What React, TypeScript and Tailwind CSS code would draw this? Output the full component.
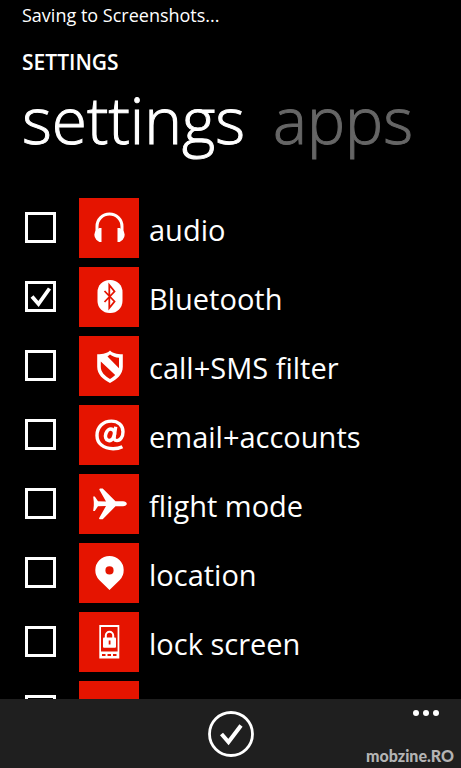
import { useState, type ReactNode } from "react";

const HeadphonesIcon = () => (
  <svg viewBox="0 0 60 60" className="size-full" aria-hidden="true">
    <path d="M18 34v-5.500a12.500 12.500 0 0 1 25 0V34" fill="none" stroke="#fff" strokeWidth="3" />
    <path d="M22.500 30v14h-2.200l-3-2.300a7 7 0 0 1 0-9.700l3-2z" fill="#fff" />
    <path d="M38.500 30v14h2.200l3-2.300a7 7 0 0 0 0-9.700l-3-2z" fill="#fff" />
  </svg>
);

const BluetoothIcon = () => (
  <svg viewBox="0 0 60 60" className="size-full" aria-hidden="true">
    <rect x="18.500" y="13" width="25" height="33" rx="12" fill="#fff" />
    <path d="M25.500 24 35.500 34.500l-5.200 6.500V18l5.200 6.500-10 10.500" fill="none" stroke="#e51400" strokeWidth="1.800" />
  </svg>
);

const ShieldIcon = () => (
  <svg viewBox="0 0 60 60" className="size-full" aria-hidden="true">
    <path
      fill="#fff"
      fillRule="evenodd"
      d="M31 14.500c2.600 2.700 6.300 3.700 12.800 3.700v12.600c0 7.600-5.800 12.700-12.800 16.200-7-3.500-12.800-8.600-12.800-16.200V18.200c6.500 0 10.200-1 12.800-3.700zM28.500 20.500 40 32.200V21.800c-3.500-.3-6.500-1.400-9-3.300zM21.800 25.500v5.300c0 5.300 3.800 9 9.200 12.200 2.200-1.300 3.800-2.500 5.200-4z"
    />
  </svg>
);

const AtIcon = () => (
  <svg viewBox="0 0 60 60" className="size-full" aria-hidden="true">
    <path
      d="M43.400 41.700c-2.800 1.400-6.100 2-9.300 2-9.600 0-16.100-5.300-16.100-13.300 0-8.600 6.300-14.300 14.400-14.300 6.700 0 11.600 4.200 11.600 10.700 0 5-2.600 8.800-6 8.800-2.700 0-3.300-1.700-2.800-4.400l1.500-9.400"
      fill="none"
      stroke="#fff"
      strokeWidth="3.400"
    />
    <ellipse cx="31" cy="29.800" rx="4.300" ry="5.900" transform="rotate(18 31 29.800)" fill="none" stroke="#fff" strokeWidth="3.600" />
  </svg>
);

const PlaneIcon = () => (
  <svg viewBox="0 0 60 60" className="size-full" aria-hidden="true">
    <path
      d="M14.200 22.500h1.600l3.200 4.800 8 .2-6.500-11.500c-.5-1 .3-1.500 1.200-1.500h2L36.500 27.300h7.500c2 0 3.800 1.200 3.800 2.500s-1.800 2.500-3.800 2.500h-7.500L23.700 45.300h-2.500c-.9 0-1.400-.5-1-1.400L27 32l-8 .2-3.200 4.800h-1.600l.6-5.600V28z"
      fill="#fff"
    />
  </svg>
);

const PinIcon = () => (
  <svg viewBox="0 0 60 60" className="size-full" aria-hidden="true">
    <path
      fill="#fff"
      fillRule="evenodd"
      d="M30.500 47 20.200 37a14.200 14.200 0 1 1 20.600 0zM30.500 23.300a4.100 4.100 0 1 0 0 8.200 4.100 4.100 0 0 0 0-8.200z"
    />
  </svg>
);

const LockScreenIcon = () => (
  <svg viewBox="0 0 60 60" className="size-full" aria-hidden="true">
    <path fill="#fff" fillRule="evenodd" d="M20.300 13h20v33.500h-20zM22 15v24.500h16.600V15z" />
    <path d="M23 42h3.500v2H23zM28.500 42H32v2h-3.500zM34 42h3.500v2H34z" fill="#e51400" />
    <path d="M26.800 26v-2.500a3.700 3.700 0 0 1 7.400 0V26" fill="none" stroke="#fff" strokeWidth="2" />
    <rect x="24" y="25.500" width="13" height="10.300" rx="1" fill="#fff" />
    <path d="M29.700 28.500h1.800v4h-1.800z" fill="#e51400" />
  </svg>
);

type Item = { id: string; label: string; icon: ReactNode };

const items: Item[] = [
  { id: "audio", label: "audio", icon: <HeadphonesIcon /> },
  { id: "bluetooth", label: "Bluetooth", icon: <BluetoothIcon /> },
  { id: "filter", label: "call+SMS filter", icon: <ShieldIcon /> },
  { id: "email", label: "email+accounts", icon: <AtIcon /> },
  { id: "flight", label: "flight mode", icon: <PlaneIcon /> },
  { id: "location", label: "location", icon: <PinIcon /> },
  { id: "lock", label: "lock screen", icon: <LockScreenIcon /> },
  { id: "more", label: "", icon: null },
];

export default function App() {
  const [selected, setSelected] = useState<string[]>(["bluetooth"]);
  const toggle = (id: string) =>
    setSelected((s) => (s.includes(id) ? s.filter((x) => x !== id) : [...s, id]));

  return (
    <div className="flex h-screen flex-col overflow-hidden bg-black font-['Open_Sans','Noto_Sans',sans-serif] text-white [font-variant-ligatures:none]">
      <header className="shrink-0 px-[22px]">
        <p className="pt-[3px] text-lg leading-6">Saving to Screenshots...</p>
        <h1 className="pt-[21px] text-[21px] leading-7 font-semibold">SETTINGS</h1>
        <nav className="flex gap-7 text-[64px] leading-[88px] whitespace-nowrap [-webkit-text-stroke-width:1px]">
          <button type="button" className="font-light">settings</button>
          <button type="button" className="font-light text-[#666]">apps</button>
        </nav>
      </header>

      <main className="min-h-0 flex-1 overflow-hidden pt-[34px] pl-[25px]">
        <ul className="flex flex-col gap-[9px]">
          {items.map((item) => (
            <li key={item.id}>
              <label className="flex h-[60px] items-center">
                <span className="grid h-8 w-[31px] shrink-0 items-start">
                  <input
                    type="checkbox"
                    aria-label={item.label || "more"}
                    checked={selected.includes(item.id)}
                    onChange={() => toggle(item.id)}
                    className="col-start-1 row-start-1 size-[31px] appearance-none border-3 border-white"
                  />
                  {selected.includes(item.id) && (
                    <svg viewBox="0 0 31 31" className="pointer-events-none col-start-1 row-start-1 size-[31px]" aria-hidden="true">
                      <path d="m7 15.500 6.500 7.500L24.500 7.500" fill="none" stroke="#fff" strokeWidth="3.800" />
                    </svg>
                  )}
                </span>
                <span className="ml-[23px] size-[60px] shrink-0 bg-[#e51400]">{item.icon}</span>
                <span className="ml-[10px] pt-1 text-[29px] leading-9 whitespace-nowrap">{item.label}</span>
              </label>
            </li>
          ))}
        </ul>
      </main>

      <footer className="grid h-[69px] shrink-0 grid-cols-[1fr_auto_1fr] items-center bg-[#1f1f1f]">
        <button type="button" aria-label="done" className="col-start-2 size-[46px]">
          <svg viewBox="0 0 46 46" className="size-full" aria-hidden="true">
            <circle cx="23" cy="23" r="21.500" fill="none" stroke="#fff" strokeWidth="2.800" />
            <path d="m13.500 23 7 8L33 14.500" fill="none" stroke="#fff" strokeWidth="4" />
          </svg>
        </button>
        <div className="flex h-full flex-col items-end justify-between pr-[7px]">
          <button type="button" aria-label="more options" className="mt-[11px] mr-[15px] flex gap-1">
            <span className="size-[6px] rounded-full bg-white" />
            <span className="size-[6px] rounded-full bg-white" />
            <span className="size-[6px] rounded-full bg-white" />
          </button>
          <p className="font-[Lato,sans-serif] text-base leading-6 font-black text-[#b4b4b4]">mobzine.RO</p>
        </div>
      </footer>
    </div>
  );
}
